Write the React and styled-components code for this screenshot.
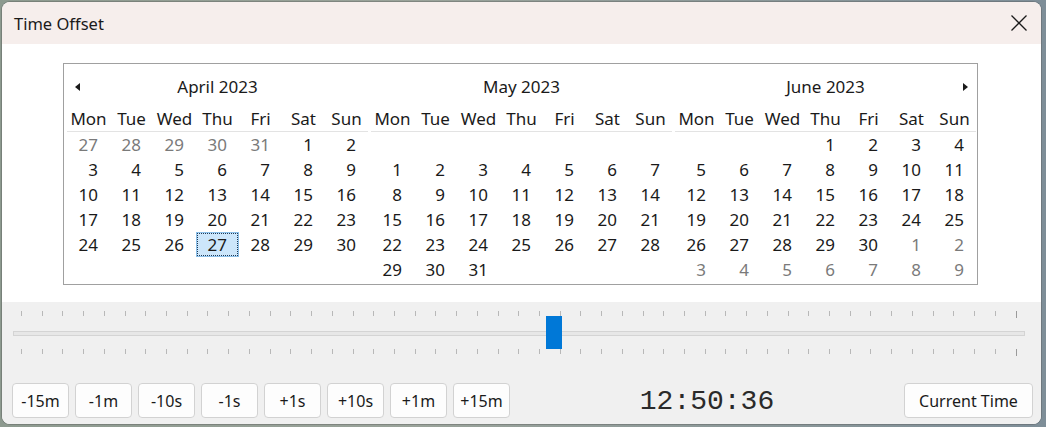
import React from "react";
import styled, { createGlobalStyle } from "styled-components";

const Global = createGlobalStyle`
  html, body { margin: 0; padding: 0; }
  body {
    background: linear-gradient(90deg, #8d9a8f 0%, #9aa39a 40%, #7e8e98 100%);
    font-family: "Noto Sans", "Segoe UI", sans-serif;
    width: 1046px; height: 427px; overflow: hidden;
  }
`;

const Page = styled.div`
  padding: 2px 0 0 2px;
`;

const Window = styled.div`
  width: 1039px;
  height: 422px;
  border-radius: 8px;
  overflow: hidden;
  background: #ffffff;
  display: flex;
  flex-direction: column;
  box-shadow: 0 0 0 1px rgba(80, 80, 80, 0.35);
`;

const TitleBar = styled.div`
  height: 42px;
  flex: none;
  background: #f6eeec;
  display: flex;
  align-items: center;
  justify-content: space-between;
  padding: 0 13px 0 12px;
`;

const Title = styled.span`
  font-size: 16.5px;
  color: #1a1a1a;
`;

const CloseBtn = styled.div`
  width: 18px;
  height: 18px;
  display: flex;
  align-items: center;
  justify-content: center;
`;

const Content = styled.div`
  height: 258px;
  flex: none;
  display: flex;
  justify-content: center;
  padding-top: 19px;
  box-sizing: border-box;
`;

const CalBox = styled.div`
  width: 915px;
  height: 222px;
  box-sizing: border-box;
  border: 1px solid #a0a0a0;
  display: flex;
  gap: 3px;
  padding: 0 2px 0 3px;
  margin-left: -2px;
`;

const Month = styled.div`
  width: 301px;
  display: flex;
  flex-direction: column;
`;

const MonthHead = styled.div`
  height: 42px;
  box-sizing: border-box;
  padding-top: 11px;
  display: flex;
  align-items: flex-start;
  justify-content: center;
  position: relative;
  font-size: 17px;
  line-height: 24px;
  color: #1a1a1a;
`;

const Arrow = styled.div`
  position: absolute;
  top: 19px;
  ${(p) => (p.$dir === "left" ? "left: 8px;" : "right: 8px;")}
  width: 0;
  height: 0;
  border-top: 4px solid transparent;
  border-bottom: 4px solid transparent;
  ${(p) =>
    p.$dir === "left"
      ? "border-right: 5px solid #1a1a1a;"
      : "border-left: 5px solid #1a1a1a;"}
`;

const Grid = styled.div`
  display: grid;
  grid-template-columns: repeat(7, 43px);
`;

const DayName = styled.div`
  height: 25px;
  line-height: 25px;
  text-align: center;
  font-size: 17px;
  color: #1a1a1a;
  border-bottom: 1px solid #e3e3e3;
`;

const Day = styled.div`
  height: 25px;
  line-height: 25px;
  text-align: right;
  padding-right: 12px;
  font-size: 17px;
  box-sizing: border-box;
  color: ${(p) => (p.$muted ? "#7a7a7a" : "#1a1a1a")};
  ${(p) =>
    p.$selected &&
    `
    background: #cce6fb;
    outline: 1px dotted #203a55;
    outline-offset: -2px;
    border: 1px solid #8cc0ea;
    padding-right: 11px;
    line-height: 23px;
  `}
`;

const Lower = styled.div`
  flex: 1;
  background: #f0f0f0;
  display: flex;
  flex-direction: column;
`;

const SliderArea = styled.div`
  position: relative;
  height: 60px;
  margin-top: 9px;
  padding: 0 16px 0 11px;
  display: flex;
  flex-direction: column;
`;

const TickRow = styled.div`
  height: 6px;
  margin-top: ${(p) => p.$gap || 0}px;
  display: flex;
  justify-content: space-between;
  padding: 0 8px 0 8px;
`;

const Tick = styled.div`
  width: 1px;
  height: ${(p) => (p.$last ? 7 : 5)}px;
  background: ${(p) => (p.$last ? "#9a9a9a" : "#b8b8b8")};
`;

const Track = styled.div`
  margin-top: 14px;
  height: 5px;
  box-sizing: border-box;
  background: #e7e7e7;
  border: 1px solid #d4d4d4;
`;

const Thumb = styled.div`
  position: absolute;
  left: 544px;
  top: 5px;
  width: 16px;
  height: 33px;
  background: #0078d7;
`;

const BottomRow = styled.div`
  margin-top: 12px;
  padding: 0 8px 0 10px;
  display: flex;
  align-items: center;
`;

const Buttons = styled.div`
  display: flex;
  gap: 6px;
`;

const Btn = styled.button`
  height: 35px;
  width: ${(p) => p.$w || 57}px;
  box-sizing: border-box;
  background: #fdfdfd;
  border: 1px solid #d2d2d2;
  border-radius: 4px;
  font-family: "Noto Sans", "Segoe UI", sans-serif;
  font-size: 16px;
  color: #1a1a1a;
  padding: 0;
`;

const Clock = styled.div`
  flex: 1;
  text-align: center;
  font-family: "Liberation Mono", "Courier New", monospace;
  font-size: 28px;
  color: #2a2a2a;
  padding-top: 1px;
`;

const months = [
  { name: "April 2023", arrow: "left", start: [27, 28, 29, 30, 31], offset: 0, days: 30, tail: 0 },
  { name: "May 2023", start: [], offset: 7, days: 31, tail: 0 },
  { name: "June 2023", arrow: "right", start: [], offset: 3, days: 30, tail: 9 },
];

const names = ["Mon", "Tue", "Wed", "Thu", "Fri", "Sat", "Sun"];

function buildCells(m) {
  const cells = [];
  m.start.forEach((d) => cells.push({ d, muted: true }));
  for (let i = 0; i < m.offset; i++) cells.push({ d: "" });
  for (let d = 1; d <= m.days; d++) cells.push({ d });
  for (let d = 1; d <= m.tail; d++) cells.push({ d, muted: true });
  return cells;
}

const Close = () => (
  <svg width="18" height="18" viewBox="0 0 18 18">
    <path d="M1.5 1.5 L16.5 16.5 M16.5 1.5 L1.5 16.5" stroke="#1a1a1a" strokeWidth="1.3" fill="none" />
  </svg>
);

const offsets = ["-15m", "-1m", "-10s", "-1s", "+1s", "+10s", "+1m", "+15m"];

export default function App() {
  const ticks = Array.from({ length: 49 });
  return (
    <Page>
      <Global />
      <Window>
        <TitleBar>
          <Title>Time Offset</Title>
          <CloseBtn>
            <Close />
          </CloseBtn>
        </TitleBar>
        <Content>
          <CalBox>
            {months.map((m, mi) => (
              <Month key={m.name}>
                <MonthHead>
                  {m.arrow && <Arrow $dir={m.arrow} />}
                  {m.name}
                </MonthHead>
                <Grid>
                  {names.map((n) => (
                    <DayName key={n}>{n}</DayName>
                  ))}
                  {buildCells(m).map((c, i) => (
                    <Day key={i} $muted={c.muted} $selected={mi === 0 && c.d === 27 && !c.muted}>
                      {c.d}
                    </Day>
                  ))}
                </Grid>
              </Month>
            ))}
          </CalBox>
        </Content>
        <Lower>
          <SliderArea>
            <TickRow>
              {ticks.map((_, i) => (
                <Tick key={i} $last={i === ticks.length - 1} />
              ))}
            </TickRow>
            <Track />
            <TickRow $gap={13}>
              {ticks.map((_, i) => (
                <Tick key={i} $last={i === ticks.length - 1} />
              ))}
            </TickRow>
            <Thumb />
          </SliderArea>
          <BottomRow>
            <Buttons>
              {offsets.map((b) => (
                <Btn key={b}>{b}</Btn>
              ))}
            </Buttons>
            <Clock>12:50:36</Clock>
            <Btn $w={129}>Current Time</Btn>
          </BottomRow>
        </Lower>
      </Window>
    </Page>
  );
}
